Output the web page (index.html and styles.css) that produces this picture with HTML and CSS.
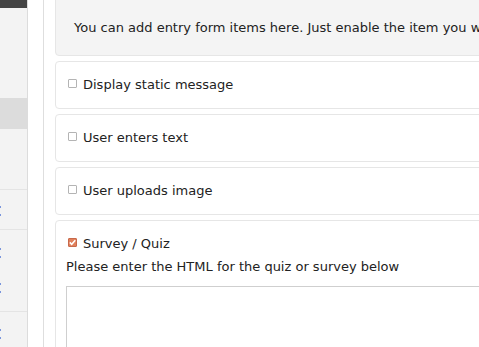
FILE: index.html
```html
<!DOCTYPE html>
<html>
<head>
<meta charset="utf-8">
<link rel="stylesheet" href="styles.css">
</head>
<body>
<div class="page">
  <aside class="sidebar">
    <div class="topbar"></div>
    <div class="nav-item nav-a"></div>
    <div class="nav-item nav-active"></div>
    <div class="nav-item nav-b"></div>
    <div class="nav-item nav-c"><span class="mark"></span><span class="mark"></span></div>
    <div class="nav-item nav-d"><span class="mark"></span><span class="mark"></span><span class="mark gap"></span><span class="mark"></span></div>
    <div class="nav-item nav-e"><span class="mark"></span><span class="mark"></span></div>
  </aside>
  <div class="spacer"></div>
  <main class="main">
    <div class="info">You can add entry form items here. Just enable the item you want to use and fill in the details below.</div>
    <div class="card">
      <label class="opt"><span class="cb"></span>Display static message</label>
    </div>
    <div class="card">
      <label class="opt"><span class="cb"></span>User enters text</label>
    </div>
    <div class="card">
      <label class="opt"><span class="cb"></span>User uploads image</label>
    </div>
    <div class="card card-open">
      <label class="opt"><span class="cb cb-on"><svg width="9" height="9" viewBox="0 0 9 9"><path d="M1.8 4.4 L3.7 6.3 L7.3 2.2" fill="none" stroke="#fff" stroke-width="1.5"/></svg></span>Survey / Quiz</label>
      <p class="hint">Please enter the HTML for the quiz or survey below</p>
      <div class="textarea"></div>
    </div>
  </main>
</div>
</body>
</html>
```

FILE: styles.css
```css
html, body {
  margin: 0;
  padding: 0;
  overflow: hidden;
  background: #fff;
}
body {
  font-family: "DejaVu Sans", Verdana, sans-serif;
  font-size: 13px;
  color: #222;
}
.page {
  display: flex;
  width: 900px;
  height: 347px;
}
.sidebar {
  width: 27px;
  flex: none;
  background: #f3f3f3;
  border-right: 1px solid #dcdcdc;
  display: flex;
  flex-direction: column;
}
.topbar {
  height: 8px;
  background: #444;
  flex: none;
}
.nav-item {
  border-bottom: 1px solid #e4e4e4;
  flex: none;
}
.nav-a { height: 90px; border-bottom: none; }
.nav-active { height: 31px; background: #dcdcdc; border-bottom: none; }
.nav-b { height: 60px; }
.nav-c { height: 40px; padding-top: 16px; box-sizing: border-box; }
.nav-d { height: 82px; padding-top: 18px; box-sizing: border-box; }
.nav-e { height: 40px; padding-top: 17px; box-sizing: border-box; }
.mark {
  display: block;
  width: 1px;
  height: 2px;
  background: #7b96dc;
  margin-bottom: 6px;
}
.mark.gap { margin-top: 25px; }
.spacer {
  width: 15px;
  flex: none;
  border-right: 1px solid #dedede;
}
.main {
  margin-left: 11px;
  width: 640px;
  flex: none;
  display: flex;
  flex-direction: column;
  gap: 5px;
}
.info {
  flex: none;
  margin-top: -9px;
  background: #f4f4f4;
  border: 1px solid #e6e6e6;
  border-radius: 4px;
  padding: 27px 18px 18px;
  line-height: 18px;
  white-space: nowrap;
}
.card {
  flex: none;
  border: 1px solid #e6e6e6;
  border-radius: 4px;
  padding: 14px 10px;
  background: #fff;
}
.opt {
  display: flex;
  align-items: center;
  line-height: 18px;
}
.cb {
  width: 7px;
  height: 7px;
  border: 1px solid #b4b4b4;
  border-radius: 1px;
  background: #fff;
  margin: 0 6px 4px 2px;
  flex: none;
  position: relative;
}
.cb-on {
  background: #e0805c;
  border-color: #c8694a;
}
.cb-on svg {
  position: absolute;
  left: -1px;
  top: -1px;
}
.hint {
  margin: 5px 0 0;
  line-height: 18px;
}
.textarea {
  margin-top: 10px;
  height: 120px;
  border: 1px solid #cfcfcf;
}
```
